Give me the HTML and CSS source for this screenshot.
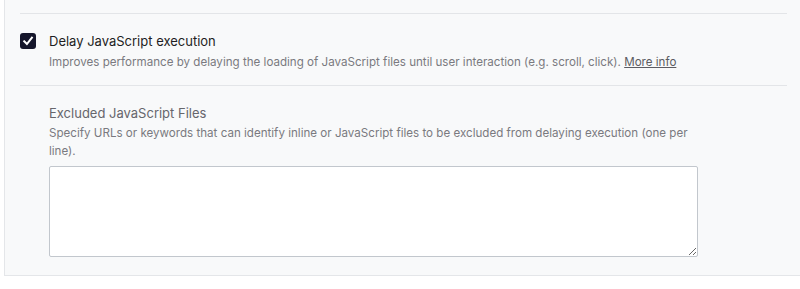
FILE: index.html
```html
<!DOCTYPE html>
<html>
<head>
<meta charset="utf-8">
<link rel="stylesheet" href="styles.css">
</head>
<body>
<div class="panel">
  <div class="row">
    <label class="option">
      <span class="checkbox">
        <svg width="16" height="16" viewBox="0 0 16 16"><path d="M4.2 8.3 L6.9 11 L11.9 4.6" fill="none" stroke="#fff" stroke-width="2" stroke-linecap="square"/></svg>
      </span>
      <span class="option-text">
        <span class="title">Delay JavaScript execution</span>
        <span class="desc">Improves performance by delaying the loading of JavaScript files until user interaction (e.g. scroll, click). <a href="#" class="more">More info</a></span>
      </span>
    </label>
  </div>
  <div class="row sub">
    <div class="field-label">Excluded JavaScript Files</div>
    <div class="desc field-desc">Specify URLs or keywords that can identify inline or JavaScript files to be excluded from delaying execution (one per line).</div>
    <textarea class="files"></textarea>
  </div>
</div>
</body>
</html>
```
FILE: styles.css
```css
html, body {
  margin: 0;
  padding: 0;
  background: #ffffff;
}
body {
  font-family: Inter, "Noto Sans", sans-serif;
  -webkit-font-smoothing: antialiased;
}
.panel {
  margin-left: 4px;
  width: 767px;
  background: #f8f9fa;
  border: 1px solid #e4e6e9;
  border-top: none;
  padding: 13px 15px 18px 15px;
}
.row {
  border-top: 1px solid #e3e5e8;
}
.option {
  display: flex;
  gap: 13px;
  padding: 18px 0 14px 0;
}
.checkbox {
  flex: none;
  width: 16px;
  height: 16px;
  background: #15162b;
  border-radius: 3px;
  margin-top: 1px;
  display: block;
}
.checkbox svg { display: block; }
.option-text {
  display: flex;
  flex-direction: column;
}
.title {
  font-size: 13px;
  line-height: 18px;
  color: #1e1e23;
  font-weight: 400;
}
.desc {
  font-size: 11.6px;
  line-height: 18px;
  color: #7a7a80;
  margin-top: 3px;
}
.more {
  color: #5c5c62;
  text-decoration: underline;
}
.sub {
  padding: 18px 0 0 29px;
}
.field-label {
  font-size: 13px;
  line-height: 18px;
  color: #66666c;
  font-weight: 400;
}
.field-desc {
  margin-top: 2px;
  width: 640px;
}
.files {
  display: block;
  box-sizing: border-box;
  margin-top: 6px;
  width: 649px;
  height: 91px;
  background: #fff;
  border: 1px solid #c2c7cd;
  border-radius: 2px;
  resize: vertical;
}
```
